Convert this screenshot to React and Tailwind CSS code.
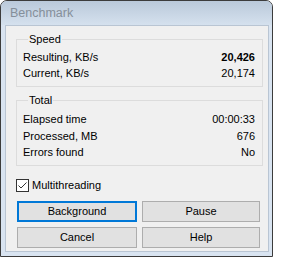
export default function App() {
  const speed = [
    { label: 'Resulting, KB/s', value: '20,426', bold: true },
    { label: 'Current, KB/s', value: '20,174' },
  ];
  const total = [
    { label: 'Elapsed time', value: '00:00:33' },
    { label: 'Processed, MB', value: '676' },
    { label: 'Errors found', value: 'No' },
  ];

  return (
    <div className="w-[283px] h-[266px] bg-white font-['Liberation_Sans',Arial,sans-serif] text-[11px] text-black">
      <div className="w-[273px] h-[257px] flex flex-col border border-[#3c3c3c] rounded-t-[7px] bg-[#d9e4f1] overflow-hidden">
        {/* title bar */}
        <div className="h-[24px] shrink-0 flex items-center pl-[9px] bg-gradient-to-b from-[#bac9da] to-[#d5e1ee] text-[12.5px] text-[#858f9a]">
          Benchmark
        </div>

        {/* client area */}
        <div className="flex-1 ml-[4px] mr-[3px] mb-[4px] border border-[#b9c5d3] bg-[#f0f0f0] pl-[10px] pr-[5px] pt-[7px]">
          <fieldset className="border border-[#dcdcdc] pl-[6px] pr-[7px] pb-[5px]">
            <legend className="ml-[5px] px-[1px] h-[13px] leading-[13px]">Speed</legend>
            <div className="pt-[3px]">
              {speed.map((r) => (
                <div key={r.label} className="h-[16px] flex items-center justify-between">
                  <span>{r.label}</span>
                  <span className={r.bold ? 'font-bold' : ''}>{r.value}</span>
                </div>
              ))}
            </div>
          </fieldset>

          <fieldset className="mt-[7px] border border-[#dcdcdc] pl-[6px] pr-[7px] pb-[4px]">
            <legend className="ml-[5px] px-[1px] h-[13px] leading-[13px]">Total</legend>
            <div className="pt-[4px]">
              {total.map((r) => (
                <div key={r.label} className="h-[16.5px] flex items-center justify-between">
                  <span>{r.label}</span>
                  <span>{r.value}</span>
                </div>
              ))}
            </div>
          </fieldset>

          <label className="mt-[13px] flex items-center h-[13px]">
            <span className="w-[13px] h-[13px] border border-[#333] bg-white flex items-center justify-center">
              <svg width="11" height="11" viewBox="0 0 11 11">
                <path d="M1.5 5.5 L4 8 L9.5 2.5" fill="none" stroke="#333" strokeWidth="1" />
              </svg>
            </span>
            <span className="ml-[3px]">Multithreading</span>
          </label>

          <div className="mt-[9px] grid grid-cols-[120px_118px] gap-x-[5px] gap-y-[5px] pl-[1px]">
            <button className="h-[21px] border-2 border-[#0078d7] bg-[#e1e1e1]">Background</button>
            <button className="h-[21px] border border-[#adadad] bg-[#e1e1e1]">Pause</button>
            <button className="h-[21px] border border-[#adadad] bg-[#e1e1e1]">Cancel</button>
            <button className="h-[21px] border border-[#adadad] bg-[#e1e1e1]">Help</button>
          </div>
        </div>
      </div>
    </div>
  );
}
